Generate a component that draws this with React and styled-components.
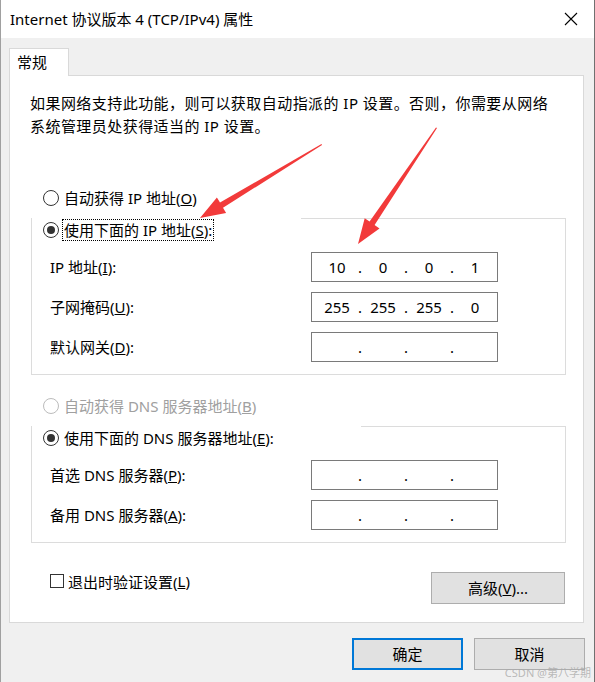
import React from 'react';
import styled, { createGlobalStyle } from 'styled-components';

const GlobalStyle = createGlobalStyle`
  html, body {
    margin: 0;
    padding: 0;
    background: #ffffff;
  }
  * {
    box-sizing: border-box;
  }
`;

const FONT = `"Noto Sans", "Noto Sans CJK SC", sans-serif`;

const StyledWindow = styled.div`
  position: relative;
  width: 595px;
  height: 682px;
  overflow: hidden;
  background: #f0f0f0;
  border-left: 1px solid #a0a0a0;
  border-right: 1px solid #707070;
  font-family: ${FONT};
  font-size: 15px;
  color: #000;
  display: flex;
  flex-direction: column;
`;

const TitleBar = styled.div`
  height: 38px;
  flex: none;
  background: #ffffff;
  display: flex;
  align-items: center;
  justify-content: space-between;
  padding-left: 9px;

  .title {
    font-size: 15px;
    line-height: 20px;
    white-space: nowrap;
  }
`;

const CloseButton = styled.div`
  width: 46px;
  height: 38px;
  display: flex;
  align-items: center;
  justify-content: center;
`;

const Body = styled.div`
  padding: 10px 0 0 8px;
  display: flex;
  flex-direction: column;
`;

const Tab = styled.div`
  position: relative;
  z-index: 1;
  width: 60px;
  height: 28px;
  margin-bottom: -1px;
  padding-left: 7px;
  background: #ffffff;
  border: 1px solid #d9d9d9;
  border-bottom: none;
  line-height: 26px;
`;

const Panel = styled.div`
  width: 575px;
  background: #ffffff;
  border: 1px solid #d9d9d9;
  padding: 16px 0 18px 0;
`;

const Description = styled.p`
  margin: 0 0 0 20px;
  line-height: 23px;
  letter-spacing: 0.45px;
  white-space: nowrap;
`;

const RadioRow = styled.div`
  display: flex;
  align-items: center;
  height: 24px;
  margin-top: ${({ $top }) => $top || 0}px;
  padding-left: ${({ $indent }) => $indent}px;
  color: ${({ $disabled }) => ($disabled ? '#a0a0a0' : '#000')};
  white-space: nowrap;
`;

const RadioCircle = styled.span`
  width: 16px;
  height: 16px;
  flex: none;
  border-radius: 50%;
  border: 1px solid ${({ $disabled }) => ($disabled ? '#bcbcbc' : '#333333')};
  background: #ffffff;
  display: flex;
  align-items: center;
  justify-content: center;

  &::after {
    content: '';
    display: ${({ $checked }) => ($checked ? 'block' : 'none')};
    width: 8px;
    height: 8px;
    border-radius: 50%;
    background: #333333;
  }
`;

const RadioLabel = styled.span`
  margin-left: 3px;
  padding: 0 1px;
  height: 22px;
  line-height: 20px;
  border: 1px dotted ${({ $focus }) => ($focus ? '#000' : 'transparent')};
`;

const GroupBox = styled.div`
  position: relative;
  width: 535px;
  margin: ${({ $top }) => $top}px 0 0 21px;
  border: 1px solid #dcdcdc;
  border-top: none;

  &::before {
    content: '';
    position: absolute;
    top: 0;
    left: ${({ $gap }) => $gap}px;
    right: -1px;
    height: 1px;
    background: #dcdcdc;
  }
`;

const Legend = styled(RadioRow)`
  margin-top: -14px;
`;

const FieldGrid = styled.div`
  display: grid;
  grid-template-columns: 261px 187px;
  row-gap: 10px;
  align-items: center;
  padding: 10px 0 12px 18px;
`;

const FieldLabel = styled.span`
  line-height: 20px;
  white-space: nowrap;
`;

const IpField = styled.div`
  height: 30px;
  border: 1px solid #7a7a7a;
  background: #ffffff;
  display: flex;
  align-items: center;
  padding-left: 6px;
`;

const Octet = styled.span`
  width: 38px;
  text-align: center;
  line-height: 20px;
`;

const Dot = styled.span`
  width: 8px;
  text-align: center;
  line-height: 20px;
`;

const BottomRow = styled.div`
  display: flex;
  justify-content: space-between;
  align-items: flex-start;
  margin-top: 29px;
  padding: 0 18px 0 40px;
`;

const CheckRow = styled.label`
  display: flex;
  align-items: center;
  height: 20px;
  margin-top: -1px;
  white-space: nowrap;
`;

const CheckBox = styled.span`
  width: 14px;
  height: 14px;
  border: 1px solid #333333;
  background: #ffffff;
  margin-right: 4px;
`;

const Button = styled.div`
  width: ${({ $width }) => $width}px;
  height: 32px;
  background: #e1e1e1;
  border: ${({ $primary }) => ($primary ? '2px solid #0078d7' : '1px solid #adadad')};
  display: flex;
  align-items: center;
  justify-content: center;
  line-height: 20px;
  white-space: nowrap;
`;

const Footer = styled.div`
  display: flex;
  justify-content: flex-end;
  gap: 11px;
  margin-top: 15px;
  padding-right: 9px;
`;

const Watermark = styled.div`
  position: absolute;
  right: 3px;
  bottom: 2px;
  font-size: 11px;
  line-height: 14px;
  color: rgba(170, 170, 170, 0.8);
  white-space: nowrap;
`;

const ArrowLayer = styled.svg`
  position: absolute;
  left: -1px;
  top: 0;
  pointer-events: none;
`;

const Radio = ({ checked, disabled, focus, indent, top, legend, children }) => {
  const Row = legend ? Legend : RadioRow;
  return (
    <Row $indent={indent} $top={top} $disabled={disabled}>
      <RadioCircle $checked={checked} $disabled={disabled} />
      <RadioLabel $focus={focus}>{children}</RadioLabel>
    </Row>
  );
};

const IpInput = ({ value }) => {
  const parts = value || ['', '', '', ''];
  return (
    <IpField>
      {parts.map((p, i) => (
        <React.Fragment key={i}>
          <Octet>{p}</Octet>
          {i < 3 && <Dot>.</Dot>}
        </React.Fragment>
      ))}
    </IpField>
  );
};

const App = () => {
  return (
    <>
      <GlobalStyle />
      <StyledWindow>
        <TitleBar>
          <span className="title">Internet 协议版本 4 (TCP/IPv4) 属性</span>
          <CloseButton>
            <svg width="14" height="14" viewBox="0 0 14 14">
              <path d="M1 1 L13 13 M13 1 L1 13" stroke="#000" strokeWidth="1.1" />
            </svg>
          </CloseButton>
        </TitleBar>

        <Body>
          <Tab>常规</Tab>
          <Panel>
            <Description>
              如果网络支持此功能，则可以获取自动指派的 IP 设置。否则，你需要从网络
              <br />
              系统管理员处获得适当的 IP 设置。
            </Description>

            <Radio indent={33} top={48}>
              自动获得 IP 地址(<u>O</u>)
            </Radio>

            <GroupBox $top={22} $gap={269}>
              <Radio legend checked focus indent={11}>
                使用下面的 IP 地址(<u>S</u>):
              </Radio>
              <FieldGrid>
                <FieldLabel>
                  IP 地址(<u>I</u>):
                </FieldLabel>
                <IpInput value={['10', '0', '0', '1']} />
                <FieldLabel>
                  子网掩码(<u>U</u>):
                </FieldLabel>
                <IpInput value={['255', '255', '255', '0']} />
                <FieldLabel>
                  默认网关(<u>D</u>):
                </FieldLabel>
                <IpInput />
              </FieldGrid>
            </GroupBox>

            <Radio indent={33} top={19} disabled>
              自动获得 DNS 服务器地址(<u>B</u>)
            </Radio>

            <GroupBox $top={22} $gap={329}>
              <Radio legend checked indent={11}>
                使用下面的 DNS 服务器地址(<u>E</u>):
              </Radio>
              <FieldGrid>
                <FieldLabel>
                  首选 DNS 服务器(<u>P</u>):
                </FieldLabel>
                <IpInput />
                <FieldLabel>
                  备用 DNS 服务器(<u>A</u>):
                </FieldLabel>
                <IpInput />
              </FieldGrid>
            </GroupBox>

            <BottomRow>
              <CheckRow>
                <CheckBox />
                退出时验证设置(<u>L</u>)
              </CheckRow>
              <Button $width={134}>
                高级(<u>V</u>)...
              </Button>
            </BottomRow>
          </Panel>

          <Footer>
            <Button $width={111} $primary>
              确定
            </Button>
            <Button $width={111}>取消</Button>
          </Footer>
        </Body>

        <Watermark>CSDN @第八学期</Watermark>

        <ArrowLayer width="595" height="682" viewBox="0 0 595 682">
          <polygon
            fill="#f23a3a"
            points="322,145 223,207.8 226.1,212.9 200,218 216.9,197.5 220,202.6 321.5,144"
          />
          <polygon
            fill="#f23a3a"
            points="437,128 374.6,225 379.5,228.4 358,244 364.7,218.2 369.6,221.6 436,127.5"
          />
        </ArrowLayer>
      </StyledWindow>
    </>
  );
};

export default App;
